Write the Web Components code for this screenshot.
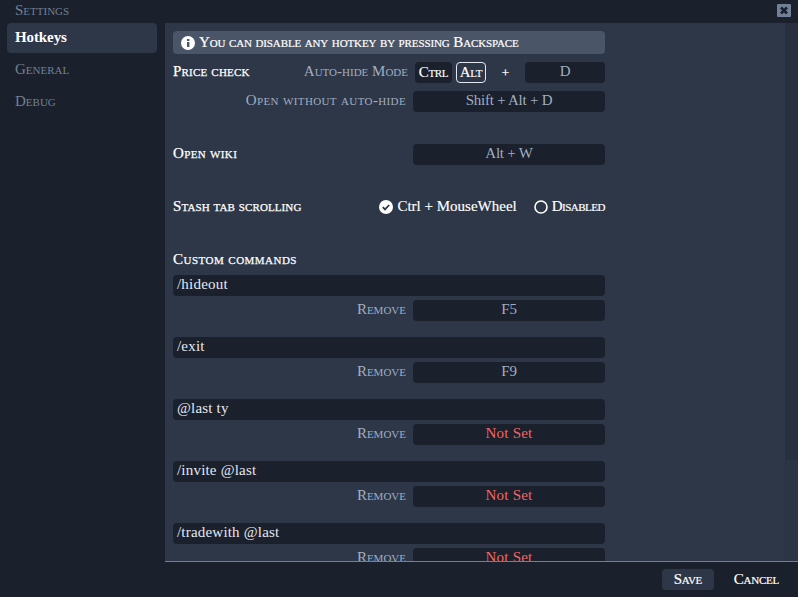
<!DOCTYPE html>
<html>
<head>
<meta charset="utf-8">
<title>Settings</title>
<style>
html,body{margin:0;height:100%;overflow:hidden;background:#1a202c}
body{font-family:"Liberation Serif",serif;font-variant:small-caps;font-size:15px;color:#fff}
</style>
</head>
<body>
<settings-window></settings-window>

<script>
//tecla: caja oscura con texto centrado
class hotkeyBox extends HTMLElement{
    constructor(){
        super()
        this.attachShadow({mode:"open"})
        this.shadowRoot.innerHTML=`<style>
        :host{display:block;width:192px;height:21px;box-sizing:border-box;background:#1a202c;border-radius:4px;
            text-align:center;line-height:19px;color:#a0aec0;font-variant:normal;font-size:15px;letter-spacing:-.25px}
        :host([unset]){color:#f56565;letter-spacing:.2px}
        :host([narrow]){width:80px}
        </style><slot></slot>`
    }
}
customElements.define("hotkey-box",hotkeyBox)

//fila con etiqueta a la derecha y una tecla
class hotkeyRow extends HTMLElement{
    constructor(){
        super()
        this.attachShadow({mode:"open"})
        this.shadowRoot.innerHTML=`<style>
        :host{display:flex;align-items:flex-start;height:21px;width:432px;line-height:19px}
        .title{color:#fff;flex:none;-webkit-text-stroke:.25px #fff}
        .label{flex:1;text-align:right;color:#a0aec0;padding-right:7px}
        </style>
        <span class="title"></span><span class="label"></span><slot></slot>`
    }
    connectedCallback(){
        let title=this.shadowRoot.querySelector(".title")
        let label=this.shadowRoot.querySelector(".label")
        title.textContent=this.getAttribute("data-title")||""
        label.textContent=this.getAttribute("data-label")||""
        //ajuste fino del ancho de cada texto
        title.style.letterSpacing=this.getAttribute("title-space")||"0"
        label.style.letterSpacing=this.getAttribute("label-space")||"0"
    }
}
customElements.define("hotkey-row",hotkeyRow)

//un comando: input arriba, quitar + tecla abajo
class commandItem extends HTMLElement{
    constructor(){
        super()
        this.attachShadow({mode:"open"})
        this.shadowRoot.innerHTML=`<style>
        :host{display:flex;flex-direction:column;gap:4px;width:432px;margin-bottom:16px}
        .text{height:21px;background:#1a202c;border-radius:4px;padding-left:4px;line-height:19px;font-variant:normal;color:#e2e8f0;letter-spacing:.2px}
        </style>
        <div class="text"></div>
        <hotkey-row data-label="Remove"><hotkey-box></hotkey-box></hotkey-row>`
    }
    connectedCallback(){
        this.shadowRoot.querySelector(".text").textContent=this.getAttribute("command")
        let box=this.shadowRoot.querySelector("hotkey-box")
        let key=this.getAttribute("key")
        if(key){box.textContent=key}
        else{box.textContent="Not Set";box.setAttribute("unset","")}
    }
}
customElements.define("command-item",commandItem)

class settingsWindow extends HTMLElement{
    constructor(){
        super()
        this.attachShadow({mode:"open"})
        this.shadowRoot.innerHTML=`<style>
        :host{display:flex;flex-direction:column;height:597px;width:798px;background:#1a202c}
        .title{height:23px;flex:none;display:flex;justify-content:space-between;align-items:flex-start;color:#718096}
        .title span{margin:1px 0 0 15px;line-height:18px}
        .close{width:14px;height:13px;margin:4px 7px 0 0;background:#718096;border-radius:1px;display:flex}
        .middle{flex:1;display:flex;min-height:0}
        nav{width:165px;flex:none;display:flex;flex-direction:column}
        nav div{margin-left:7px;width:150px;height:30px;line-height:28px;padding-left:8px;box-sizing:border-box;color:#718096;margin-bottom:2px}
        nav .on{background:#2d3748;border-radius:4px;color:#fff;font-weight:bold;font-variant:normal;letter-spacing:-.1px}
        main{flex:1;display:flex;background:#2d3748;overflow:hidden;border-bottom:1px solid #718096}
        .scroll{flex:1;padding:8px;min-width:0;overflow:hidden}
        .bar{width:13px;flex:none;background:#2b3544;box-shadow:inset 1px 0 #293241}
        .thumb{height:437px;background:#283040}
        .banner{width:432px;height:23px;box-sizing:border-box;background:#4a5568;border-radius:4px;display:flex;align-items:center;gap:4px;padding-left:8px;margin-bottom:8px;letter-spacing:-.12px;-webkit-text-stroke:.2px #fff}
        .banner svg{flex:none}
        .stack{display:flex;flex-direction:column}
        .mods{display:flex;align-items:center}
        .mod{height:21px;box-sizing:border-box;border-radius:4px;text-align:center;line-height:20px;letter-spacing:-.3px;-webkit-text-stroke:.15px #fff}
        .mod.on{width:37px;background:#1a202c}
        .mod.sel{width:30px;border:1px solid #e2e8f0;margin-left:4px;line-height:18px}
        .plus{width:39px;text-align:center;font-size:13px;-webkit-text-stroke:.25px #fff}
        .radios{display:flex;gap:16px;margin-left:auto;height:21px;margin-top:-1px}
        .radios span{display:flex;align-items:center;gap:4px;margin-left:1px}
        .radios .wheel{font-variant:normal;letter-spacing:0;-webkit-text-stroke:.15px #fff}
        .radios .off{letter-spacing:-.5px;-webkit-text-stroke:.2px #fff}
        .heading{height:21px;line-height:23px;margin-bottom:5px;letter-spacing:.47px;-webkit-text-stroke:.25px #fff}
        .footer{height:35px;flex:none;display:flex;justify-content:flex-end;align-items:center;gap:20px;padding-right:19px}
        .btn{height:21px;line-height:20px;border-radius:4px;-webkit-text-stroke:.2px #fff}
        .btn.save{background:#2d3748;width:52px;text-align:center;letter-spacing:-.3px}
        .btn.cancel{letter-spacing:-.25px}
        </style>
        <div class="title"><span>Settings</span>
            <div class="close"><svg width="14" height="13" viewBox="0 0 14 13"><path d="M4 3.5l6 6M10 3.5l-6 6" stroke="#1a202c" stroke-width="2.6"/></svg></div>
        </div>
        <div class="middle">
            <nav><div class="on">Hotkeys</div><div>General</div><div>Debug</div></nav>
            <main>
                <div class="scroll">
                    <div class="banner">
                        <svg width="14" height="14" viewBox="0 0 14 14"><circle cx="7" cy="7" r="7" fill="#fff"/><rect x="6" y="6" width="2.4" height="5" fill="#4a5568"/><rect x="6" y="3" width="2.4" height="2" fill="#4a5568"/></svg>
                        <span>You can disable any hotkey by pressing Backspace</span>
                    </div>
                    <div class="stack">
                        <hotkey-row data-title="Price check" title-space=".2px" data-label="Auto-hide Mode" style="margin-bottom:8px">
                            <div class="mods"><div class="mod on">Ctrl</div><div class="mod sel">Alt</div><div class="plus">+</div><hotkey-box narrow>D</hotkey-box></div>
                        </hotkey-row>
                        <hotkey-row data-label="Open without auto-hide" label-space=".37px" style="margin-bottom:32px"><hotkey-box>Shift + Alt + D</hotkey-box></hotkey-row>
                        <hotkey-row data-title="Open wiki" title-space=".35px" style="margin-bottom:32px"><hotkey-box>Alt + W</hotkey-box></hotkey-row>
                        <hotkey-row data-title="Stash tab scrolling" title-space=".1px" style="margin-bottom:30px">
                            <div class="radios">
                                <span><svg width="14" height="14" viewBox="0 0 14 14"><circle cx="7" cy="7" r="7" fill="#fff"/><path d="M3.8 7.2l2.2 2.2 4.2-4.4" fill="none" stroke="#2d3748" stroke-width="1.8"/></svg><i class="wheel" style="font-style:normal">Ctrl + MouseWheel</i></span>
                                <span><svg width="14" height="14" viewBox="0 0 14 14"><circle cx="7" cy="7" r="6" fill="none" stroke="#fff" stroke-width="1.6"/></svg><i class="off" style="font-style:normal">Disabled</i></span>
                            </div>
                        </hotkey-row>
                        <div class="heading">Custom commands</div>
                        <command-item command="/hideout" key="F5" style="margin-top:1px"></command-item>
                        <command-item command="/exit" key="F9"></command-item>
                        <command-item command="@last ty"></command-item>
                        <command-item command="/invite @last"></command-item>
                        <command-item command="/tradewith @last"></command-item>
                    </div>
                </div>
                <div class="bar"><div class="thumb"></div></div>
            </main>
        </div>
        <div class="footer"><div class="btn save">Save</div><div class="btn cancel">Cancel</div></div>`
    }
}
customElements.define("settings-window",settingsWindow)
</script>
</body>
</html>
